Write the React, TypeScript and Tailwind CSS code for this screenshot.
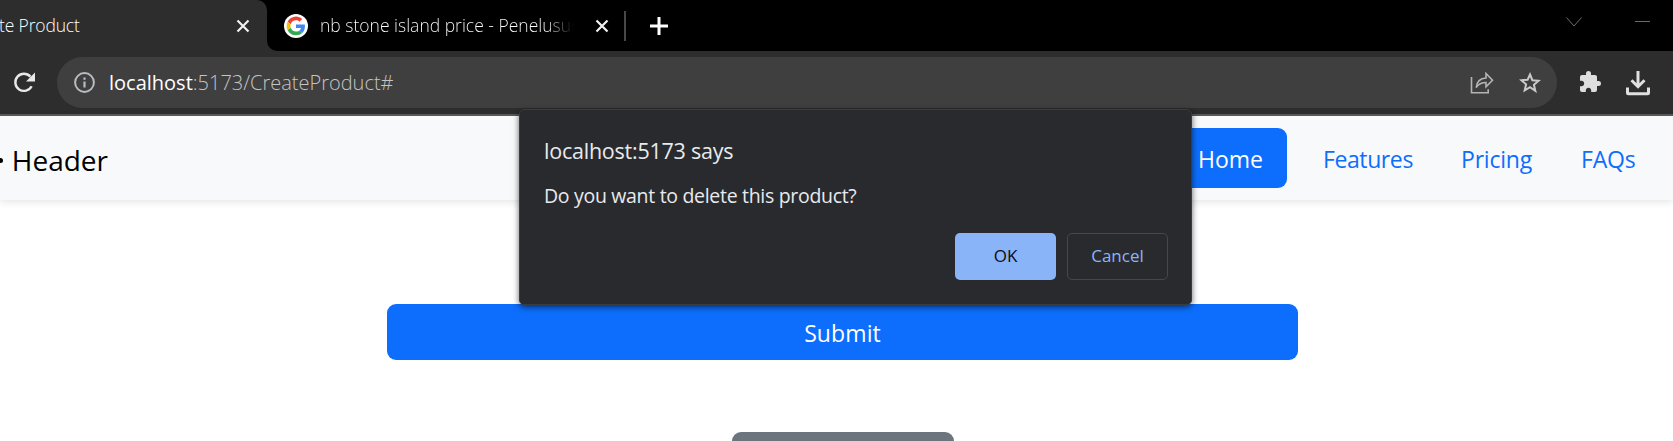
import type { ReactNode } from "react";

function TabClose() {
  return (
    <svg width="14" height="14" viewBox="0 0 14 14" className="shrink-0" stroke="#f1f1f1" strokeWidth="2.2">
      <path d="M1.5 1.5 12.5 12.5M12.5 1.5 1.5 12.5" />
    </svg>
  );
}

function GoogleIcon() {
  return (
    <svg width="24" height="24" viewBox="0 0 24 24" className="shrink-0">
      <circle cx="12" cy="12" r="12" fill="#fff" />
      <g transform="translate(2.6 2.6) scale(0.39)">
        <path fill="#EA4335" d="M24 9.5c3.54 0 6.71 1.22 9.21 3.6l6.85-6.85C35.9 2.38 30.47 0 24 0 14.62 0 6.51 5.38 2.56 13.22l7.98 6.19C12.43 13.72 17.74 9.5 24 9.5z" />
        <path fill="#4285F4" d="M46.98 24.55c0-1.57-.15-3.09-.38-4.55H24v9.02h12.94c-.58 2.96-2.26 5.48-4.78 7.18l7.73 6c4.51-4.18 7.09-10.36 7.09-17.65z" />
        <path fill="#FBBC05" d="M10.53 28.59c-.48-1.45-.76-2.99-.76-4.59s.27-3.14.76-4.59l-7.98-6.19C.92 16.46 0 20.12 0 24c0 3.88.92 7.54 2.56 10.78l7.97-6.19z" />
        <path fill="#34A853" d="M24 48c6.48 0 11.93-2.13 15.89-5.81l-7.73-6c-2.15 1.45-4.92 2.3-8.16 2.3-6.26 0-11.57-4.22-13.47-9.91l-7.98 6.19C6.51 42.62 14.62 48 24 48z" />
      </g>
    </svg>
  );
}

function TabStrip() {
  return (
    <div className="flex h-[51px] shrink-0 bg-black font-light text-[17.5px] text-white">
      <div className="flex h-full w-[267px] shrink-0 items-center justify-between overflow-hidden rounded-tr-[10px] bg-[#2d2d2d] pr-[17px]">
        <span className="-ml-px whitespace-nowrap tracking-[-0.15px]">te Product</span>
        <TabClose />
      </div>
      <div className="flex flex-1 bg-[#2d2d2d]">
        <div className="flex flex-1 items-center rounded-bl-[10px] bg-black">
          <div className="ml-[17px] flex">
            <GoogleIcon />
          </div>
          <span className="ml-[12px] w-[257px] overflow-hidden whitespace-nowrap bg-linear-to-r from-white from-88% to-black bg-clip-text text-transparent">
            nb stone island price - Penelusur
          </span>
          <div className="ml-[18px] flex">
            <TabClose />
          </div>
          <div className="ml-[15px] h-[30px] w-[2px] bg-[#484848]" />
          <svg width="18" height="18" viewBox="0 0 18 18" className="ml-[24px]" stroke="#fff" strokeWidth="3">
            <path d="M9 0v18M0 9h18" />
          </svg>
          <div className="mr-[23px] mb-[8px] ml-auto flex items-center gap-[53px]">
            <svg width="16" height="10" viewBox="0 0 16 10" fill="none" stroke="#6b6b6b">
              <path d="M.5.5 8 9 15.5.5" />
            </svg>
            <div className="h-px w-[15px] bg-[#6b6b6b]" />
          </div>
        </div>
      </div>
    </div>
  );
}

function Toolbar() {
  return (
    <div className="flex h-[65px] shrink-0 border-b-2 border-[#5a5a5a] bg-[#2d2d2d] pt-[6px]">
      <svg width="22" height="21" viewBox="0 0 22 21" className="mt-[15px] ml-[13px] shrink-0" fill="none">
        <path d="M18.6 14.2A8.6 8.6 0 1 1 17.4 4.6" stroke="#e8e8e8" strokeWidth="2.4" />
        <path d="M22 .5v9h-9z" fill="#e8e8e8" />
      </svg>
      <div className="ml-[22px] flex h-[51px] w-[1500px] shrink-0 items-center rounded-full bg-[#3f3f3f] pr-[16px] pl-[17px]">
        <svg width="21" height="21" viewBox="0 0 21 21" fill="none" stroke="#b8bbc0" strokeWidth="2">
          <circle cx="10.5" cy="10.5" r="9.4" />
          <path d="M10.5 9.5v6M10.5 5.5v2.2" strokeWidth="2.2" />
        </svg>
        <span className="ml-[14px] whitespace-nowrap text-[20px] text-white">localhost</span>
        <span className="whitespace-nowrap font-light text-[20px] text-[#c4c4c4]">:5173/CreateProduct#</span>
        <svg width="24" height="22" viewBox="0 0 24 22" className="ml-auto" fill="none" stroke="#b4b4b4" strokeWidth="1.6">
          <path d="M1.5 5v15.7h16.7v-3.5" />
          <path d="M6.2 15.5C6.8 9.5 10.5 6.3 16 6V1.5l6.5 6.8-6.5 6.5v-4.3c-4.5 0-7.500 1.500-9.800 5z" />
        </svg>
        <svg width="22" height="21" viewBox="0 0 22 21" className="ml-[25px]" fill="none" stroke="#cacaca" strokeWidth="2">
          <path d="M11 2.500l2.400 5.700 6.200.5-4.700 4.100 1.400 6L11 15.100l-5.300 3.200 1.400-6-4.700-4.100 6.200-.5z" />
        </svg>
      </div>
      <svg width="24" height="24" viewBox="0 0 24 24" className="mt-[13px] ml-[21px] shrink-0" fill="#dedede">
        <path d="M20.500 11H19V7c0-1.100-.9-2-2-2h-4V3.500a2.500 2.500 0 0 0-5 0V5H4c-1.100 0-1.990.9-1.990 2v3.800H3.500c1.490 0 2.700 1.210 2.700 2.700s-1.210 2.700-2.700 2.700H2V20c0 1.100.9 2 2 2h3.800v-1.500c0-1.490 1.210-2.700 2.700-2.700s2.700 1.210 2.700 2.700V22H17c1.100 0 2-.9 2-2v-4h1.500a2.500 2.500 0 0 0 0-5z" />
      </svg>
      <svg width="26" height="26" viewBox="0 0 26 26" className="mt-[13px] ml-[23px] shrink-0" fill="none" stroke="#e0e0e0" strokeWidth="3">
        <path d="M13 1v16M6.500 10.200 13 16.700l6.500-6.500" />
        <path d="M2.500 17.500V23q0 .7.700.7h19.600q.7 0 .7-.7v-5.500" />
      </svg>
    </div>
  );
}

function NavLink({ children, className }: { children: ReactNode; className: string }) {
  return <a className={"whitespace-nowrap pt-[4px] text-[23px] text-[#0d6efd] " + className}>{children}</a>;
}

function SiteHeader() {
  return (
    <header className="flex h-[84px] shrink-0 items-center bg-[#f8f9fb] shadow-[0_2px_8px_rgba(0,0,0,0.11)]">
      <div className="mt-[3px] flex w-[108px] items-center justify-end gap-[9px]">
        <span className="mt-px h-[5px] w-[3px] rounded-r-full bg-black" />
        <span className="whitespace-nowrap text-[28px] text-black">Header</span>
      </div>
      <nav className="mb-px ml-auto flex items-center pr-[37px]">
        <div className="flex h-[60px] w-[112px] items-center justify-end rounded-[9px] bg-[#0d6efd] pt-[4px] pr-[24px] text-[23px] text-white">
          Home
        </div>
        <NavLink className="ml-[36px] w-[90px] tracking-[-0.4px]">Features</NavLink>
        <NavLink className="ml-[48px] w-[71px] tracking-[-0.2px]">Pricing</NavLink>
        <NavLink className="ml-[49px] w-[55px] tracking-[-0.2px]">FAQs</NavLink>
      </nav>
    </header>
  );
}

function ConfirmDialog() {
  return (
    <div className="absolute top-[109px] left-[519px] flex h-[196px] w-[673px] flex-col rounded-[5px] border border-[#3b3c3f] bg-[#292a2d] pr-[23px] pl-[24px] text-[#e8eaed] shadow-[0_2px_6px_rgba(0,0,0,0.6)]">
      <h1 className="mt-[26px] h-[30px] whitespace-nowrap text-[21.5px] leading-[30px] tracking-[-0.23px]">localhost:5173 says</h1>
      <p className="mt-[16px] h-[28px] whitespace-nowrap text-[19.5px] leading-[28px] tracking-[-0.31px]">Do you want to delete this product?</p>
      <div className="mt-[23px] flex justify-end gap-[11px] text-[17px] leading-[44px]">
        <button className="h-[47px] w-[101px] rounded-[5px] bg-[#8ab4f8] pb-[2px] font-medium text-[#0c0d10]">OK</button>
        <button className="h-[47px] w-[101px] rounded-[5px] border border-[#45474b] pb-[2px] font-medium text-[#8ab4f8]">Cancel</button>
      </div>
    </div>
  );
}

export default function App() {
  return (
    <div className="relative flex h-[441px] w-[1673px] flex-col overflow-hidden bg-white font-['Open_Sans','Noto_Sans',sans-serif]">
      <TabStrip />
      <Toolbar />
      <SiteHeader />
      <main className="flex h-[241px] shrink-0 flex-col overflow-hidden pt-[104px] pl-[387px]">
        <button className="h-[56px] w-[911px] shrink-0 rounded-[9px] bg-[#0d6efd] pt-[3px] text-[23px] tracking-[0.1px] text-white">Submit</button>
        <div className="mt-[72px] ml-[345px] h-[56px] w-[222px] shrink-0 rounded-[9px] bg-[#6c757d]" />
      </main>
      <ConfirmDialog />
    </div>
  );
}
